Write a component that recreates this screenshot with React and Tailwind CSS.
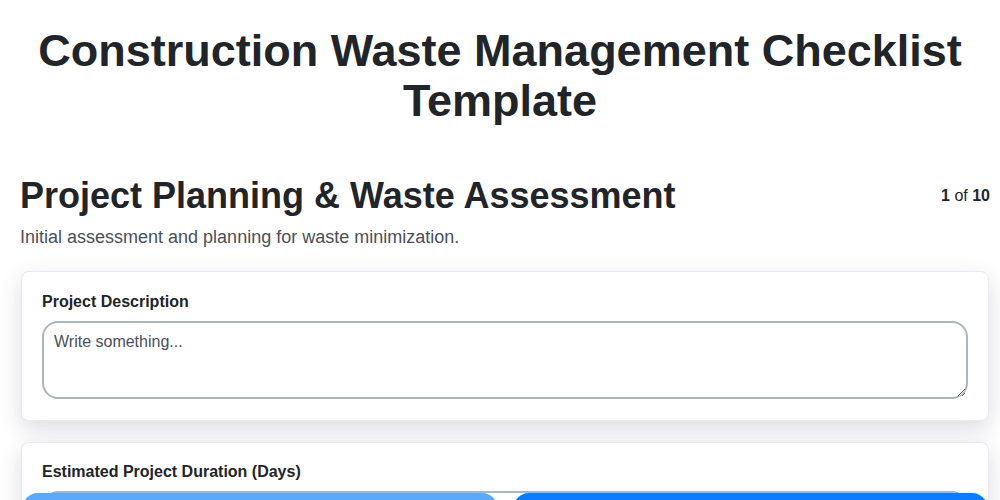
export default function App() {
  return (
    <div className="min-h-screen bg-white text-[#212529]" style={{ fontFamily: '"Liberation Sans", Arial, sans-serif' }}>
      <div className="px-5 pt-[26px] pb-24">
        <h1 className="text-center text-[45px] font-bold leading-[50px] mb-[48px]">
          Construction Waste Management Checklist Template
        </h1>

        <div className="mr-[-10px]">
          <div className="flex items-start justify-between">
            <h2 className="text-[36px] font-bold leading-[1.2]">Project Planning &amp; Waste Assessment</h2>
            <div className="text-[16px] mt-[10px]">
              <span className="font-bold">1</span> of <span className="font-bold">10</span>
            </div>
          </div>
          <p className="text-[18px] text-[#495057] mt-[7px] mb-[20px]">Initial assessment and planning for waste minimization.</p>

          <div className="flex flex-col gap-[21px]">
            <div className="mx-px rounded-lg border border-[#e9e9f0] bg-white px-[20px] pt-[18px] pb-[21px] shadow-[0_8px_22px_rgba(40,40,80,0.16)]">
              <label className="block text-[16px] font-bold mb-[7px]">Project Description</label>
              <textarea
                placeholder="Write something..."
                className="block w-full h-[78px] rounded-2xl border-2 border-[#adb5bd] px-[10px] py-[7px] text-[16px] placeholder:text-[#495057] outline-none"
              />
            </div>

            <div className="mx-px rounded-lg border border-[#e9e9f0] bg-white px-[20px] pt-[17px] pb-[21px] shadow-[0_8px_22px_rgba(40,40,80,0.16)]">
              <label className="block text-[16px] font-bold mb-[7px]">Estimated Project Duration (Days)</label>
              <input
                type="number"
                className="block w-full h-[44px] rounded-2xl border-2 border-[#adb5bd] px-[10px] text-[16px] outline-none"
              />
            </div>
          </div>
        </div>
      </div>

      <div className="fixed left-0 right-0 bottom-[-37px] flex gap-[15px] pl-[22px] pr-[12px]">
        <button className="flex-1 h-[44px] rounded-2xl bg-[#5aa9fa] text-white text-[16px] font-bold">Previous</button>
        <button className="flex-1 h-[44px] rounded-2xl bg-[#0a7cff] text-white text-[16px] font-bold">Next</button>
      </div>
    </div>
  )
}
